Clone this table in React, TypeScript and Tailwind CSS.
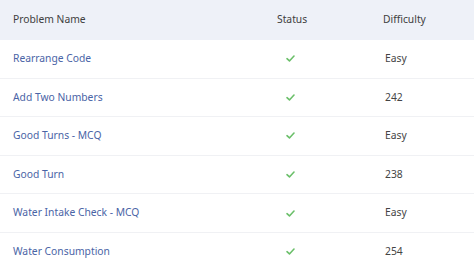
import React from "react";

const rows = [
  { name: "Rearrange Code", diff: "Easy" },
  { name: "Add Two Numbers", diff: "242" },
  { name: "Good Turns - MCQ", diff: "Easy" },
  { name: "Good Turn", diff: "238" },
  { name: "Water Intake Check - MCQ", diff: "Easy" },
  { name: "Water Consumption", diff: "254" },
];

function Check() {
  return (
    <svg width="9" height="7" viewBox="0 0 10 8" fill="none">
      <path d="M1 4.2 L3.8 6.8 L9 1.2" stroke="#6abf69" strokeWidth="1.8" strokeLinecap="round" strokeLinejoin="round" />
    </svg>
  );
}

export default function App() {
  return (
    <div className="w-[474px] h-[271px] overflow-hidden bg-white text-[10.3px]" style={{ fontFamily: '"Noto Sans", "Open Sans", sans-serif' }}>
      <div className="grid grid-cols-[240px_100px_1fr] h-[40px] items-center bg-[#eef1f8] text-[#404040]">
        <div className="pl-[13px]">Problem Name</div>
        <div className="pl-[37px]">Status</div>
        <div className="pl-[43px]">Difficulty</div>
      </div>
      {rows.map((r) => (
        <div key={r.name} className="grid grid-cols-[240px_100px_1fr] h-[38.6px] items-center border-b border-[#f0f1f4] text-[#444]">
          <div className="pl-[13px] text-[#4a64a6]">{r.name}</div>
          <div className="flex justify-center"><Check /></div>
          <div className="pl-[45px]">{r.diff}</div>
        </div>
      ))}
    </div>
  );
}
